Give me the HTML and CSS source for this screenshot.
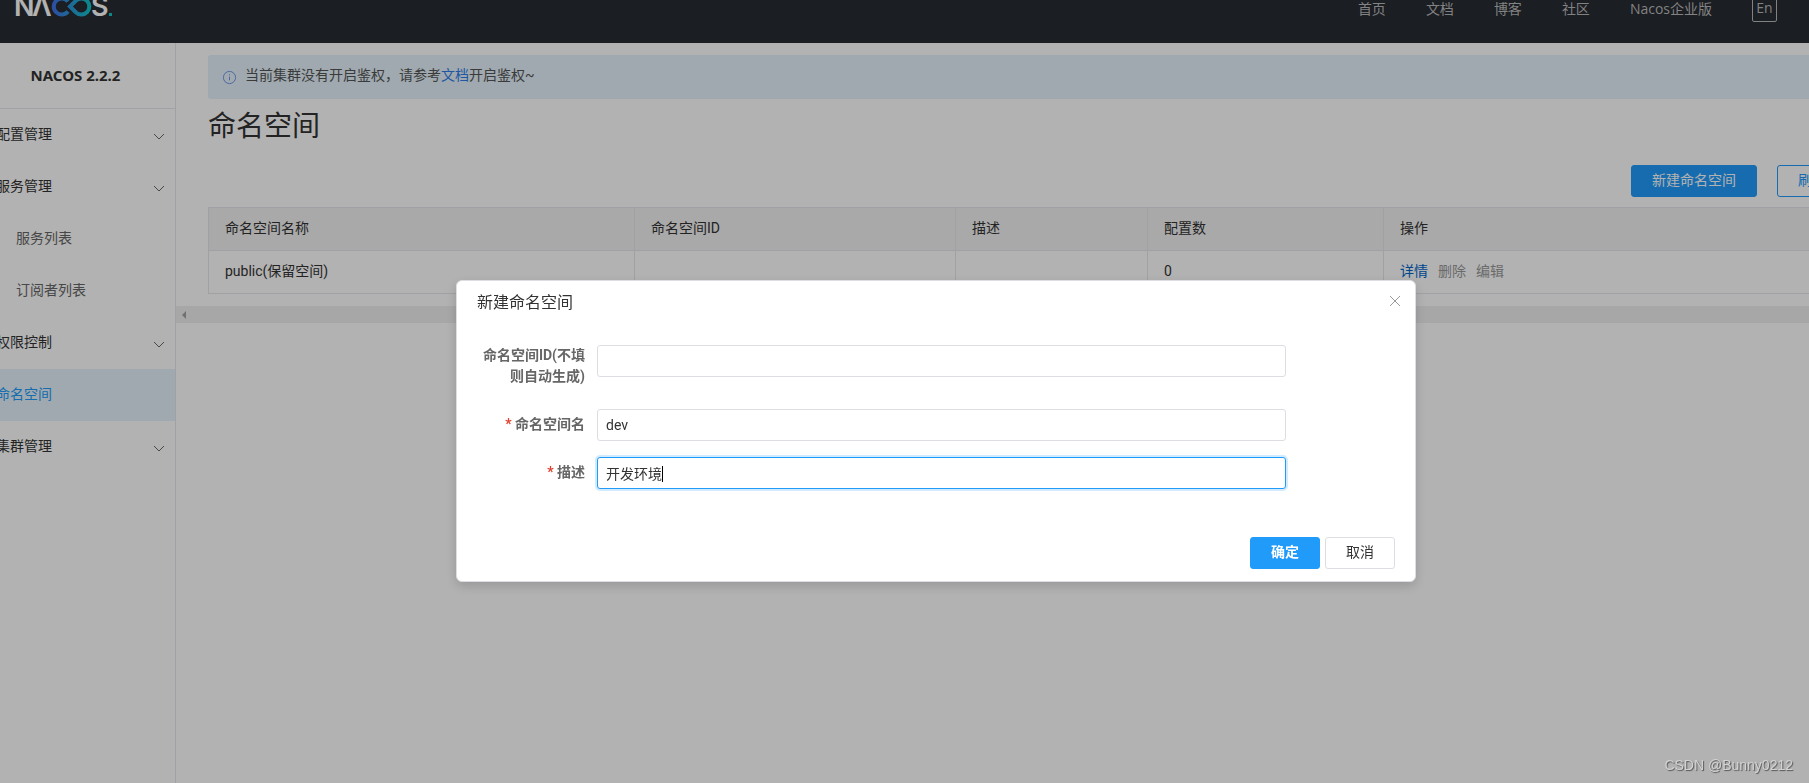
FILE: index.html
```html
<!DOCTYPE html>
<html lang="zh-CN">
<head>
<meta charset="utf-8">
<title>Nacos</title>
<link rel="stylesheet" href="styles.css">
</head>
<body>
<header class="header">
  <a class="logo" href="#" aria-label="NACOS">
    <svg width="98" height="26" viewBox="0 0 98 26">
      <defs>
        <linearGradient id="loop" x1="0" x2="1" y1="0" y2="0">
          <stop offset="0" stop-color="#3f74e8"/>
          <stop offset="1" stop-color="#12c2c9"/>
        </linearGradient>
      </defs>
      <g class="logo-text">
        <text x="-2" y="20">N</text>
        <text x="16" y="20">Λ</text>
        <text x="75" y="20">S</text>
      </g>
      <path d="M52 5.500A8 8 0 1 0 52 15.500M54 10.500L60 4.500A8 8 0 1 1 60 16.500Z" fill="none" stroke="url(#loop)" stroke-width="4"/>
      <rect x="93" y="17" width="3" height="3" fill="#12c2c9"/>
    </svg>
  </a>
  <nav class="nav">
    <a href="#">首页</a>
    <a href="#">文档</a>
    <a href="#">博客</a>
    <a href="#">社区</a>
    <a href="#">Nacos企业版</a>
    <button class="lang" type="button">En</button>
  </nav>
</header>
<div class="layout">
  <aside class="sidebar">
    <h1 class="version">NACOS 2.2.2</h1>
    <nav class="menu">
      <a class="item" href="#">配置管理<svg class="chevron" viewBox="0 0 12 8"><path d="M1 1l5 5 5-5"/></svg></a>
      <a class="item" href="#">服务管理<svg class="chevron" viewBox="0 0 12 8"><path d="M1 1l5 5 5-5"/></svg></a>
      <a class="item sub" href="#">服务列表</a>
      <a class="item sub" href="#">订阅者列表</a>
      <a class="item" href="#">权限控制<svg class="chevron" viewBox="0 0 12 8"><path d="M1 1l5 5 5-5"/></svg></a>
      <a class="item selected" href="#">命名空间</a>
      <a class="item" href="#">集群管理<svg class="chevron" viewBox="0 0 12 8"><path d="M1 1l5 5 5-5"/></svg></a>
    </nav>
  </aside>
  <main class="main">
    <div class="content">
      <div class="notice">
        <svg class="info" viewBox="0 0 16 16"><circle cx="8" cy="8" r="6.500"/><path d="M8 7v4M8 4.500v1.200"/></svg>
        <p>当前集群没有开启鉴权，请参考<a href="#">文档</a>开启鉴权~</p>
      </div>
      <h2 class="page-title">命名空间</h2>
      <div class="toolbar">
        <button class="btn primary" type="button">新建命名空间</button>
        <button class="btn outline" type="button">刷新</button>
      </div>
      <table class="table">
        <colgroup><col class="c-name"><col class="c-id"><col class="c-desc"><col class="c-count"><col></colgroup>
        <thead>
          <tr><th>命名空间名称</th><th>命名空间ID</th><th>描述</th><th>配置数</th><th>操作</th></tr>
        </thead>
        <tbody>
          <tr>
            <td>public(保留空间)</td><td></td><td></td><td>0</td>
            <td><div class="actions"><a href="#">详情</a><span>删除</span><span>编辑</span></div></td>
          </tr>
        </tbody>
      </table>
    </div>
    <div class="scrollbar"><svg width="5" height="8" viewBox="0 0 5 8"><path d="M4 0v8L0 4z"/></svg></div>
  </main>
</div>
<div class="overlay">
  <section class="dialog" role="dialog" aria-labelledby="dialog-title">
    <div class="dialog-head">
      <h2 id="dialog-title">新建命名空间</h2>
      <button class="close" type="button" aria-label="关闭"><svg width="12" height="12" viewBox="0 0 12 12"><path d="M1 1l10 10M11 1L1 11"/></svg></button>
    </div>
    <form class="form">
      <div class="field tall">
        <label for="ns-id">命名空间ID(不填则自动生成)</label>
        <input id="ns-id" type="text">
      </div>
      <div class="field">
        <label for="ns-name"><span class="star">*</span> 命名空间名</label>
        <input id="ns-name" type="text" value="dev">
      </div>
      <div class="field">
        <label for="ns-desc"><span class="star">*</span> 描述</label>
        <div class="control">
          <input id="ns-desc" class="active" type="text" value="开发环境">
          <span class="caret"></span>
        </div>
      </div>
    </form>
    <div class="dialog-foot">
      <button class="btn primary strong" type="button">确定</button>
      <button class="btn" type="button">取消</button>
    </div>
  </section>
</div>
<div class="watermark">CSDN @Bunny0212</div>
</body>
</html>
```
FILE: styles.css
```css
* { box-sizing: border-box; }
html, body { height: 100%; }
body {
  margin: 0;
  overflow: hidden;
  display: flex;
  flex-direction: column;
  background: #fff;
  color: #333;
  font: 14px/20px Roboto, "Noto Sans CJK SC", sans-serif;
}
h1, h2, p { margin: 0; font-weight: 400; }
a { color: inherit; text-decoration: none; }
button, input { font: inherit; color: inherit; }

.header {
  flex: none;
  height: 66px;
  margin-top: -23px;
  padding: 0 32px 2px 16px;
  display: flex;
  justify-content: space-between;
  align-items: center;
  background: #272b32;
}
.logo svg { display: block; overflow: visible; }
.logo-text { font: 600 27px Inter, sans-serif; fill: #fff; }
.nav {
  display: flex;
  align-items: center;
  gap: 40px;
  color: #bababa;
  font-family: "Open Sans", "Noto Sans CJK SC", sans-serif;
}
.lang {
  width: 25px;
  height: 26px;
  padding: 0 0 3px;
  background: none;
  border: 1px solid #bababa;
  border-radius: 2px;
}

.layout { flex: 1; display: flex; min-height: 0; }
.sidebar {
  flex: none;
  width: 200px;
  margin-left: -24px;
  border-right: 1px solid #e6e7eb;
}
.version {
  height: 66px;
  border-bottom: 1px solid #e6e7eb;
  font: 700 15px/64px "Noto Sans", sans-serif;
  text-align: center;
}
.item {
  display: flex;
  justify-content: space-between;
  align-items: center;
  height: 52px;
  padding: 0 10px 2px 20px;
}
.item.sub { padding-left: 40px; color: #666; }
.item.selected { background: #e4f3fb; color: #209bfa; }
.chevron { width: 12px; height: 8px; margin-top: 6px; fill: none; stroke: #666; }

.main { flex: 1; min-width: 0; }
.content { margin-right: -38px; padding: 12px 0 12px 32px; }
.notice {
  display: flex;
  align-items: center;
  gap: 8px;
  height: 44px;
  padding: 0 14px;
  background: #e4f3fb;
  border-radius: 3px;
  color: #555;
}
.notice p { padding-bottom: 4px; }
.notice a { color: #2e7de9; }
.info { width: 15px; height: 15px; fill: none; stroke: #6b8fe8; }
.page-title { padding-top: 8px; font-size: 28px; line-height: 40px; }
.toolbar {
  display: flex;
  justify-content: flex-end;
  gap: 20px;
  padding: 18px 0 10px;
}
.btn {
  height: 32px;
  padding: 0 20px 3px;
  background: #fff;
  border: 1px solid #dcdee3;
  border-radius: 3px;
  line-height: 26px;
}
.btn.primary { background: #209bfa; border-color: #209bfa; color: #fff; }
.btn.outline { border-color: #209bfa; color: #209bfa; }
.btn.strong { font-weight: 700; }

.table { width: 100%; table-layout: fixed; border-collapse: collapse; }
.c-name { width: 426px; }
.c-id { width: 321px; }
.c-desc { width: 192px; }
.c-count { width: 236px; }
.table th, .table td {
  height: 43px;
  padding: 0 16px 2px;
  border: 1px solid #e6e7eb;
  font-weight: 400;
  text-align: left;
}
.table th { background: #f2f2f2; }
.actions { display: flex; gap: 10px; color: #999; }
.actions a { color: #06c; }
.scrollbar { height: 17px; padding: 5px 6px; background: #f0f0f0; }
.scrollbar svg { display: block; fill: #a3a3a3; }

.overlay {
  position: fixed;
  inset: 0;
  display: flex;
  justify-content: center;
  align-items: flex-start;
  padding: 280px 0 0 63px;
  background: rgba(0, 0, 0, 0.3);
}
.dialog {
  width: 960px;
  background: #fff;
  border: 1px solid #dcdee3;
  border-radius: 6px;
  box-shadow: 0 4px 12px rgba(0, 0, 0, 0.16);
}
.dialog-head {
  display: flex;
  justify-content: space-between;
  padding: 12px 14px 12px 20px;
}
.dialog-head h2 { font-size: 16px; line-height: 20px; }
.close { display: flex; align-items: center; height: 16px; padding: 0; background: none; border: 0; }
.close svg { fill: none; stroke: #999; }
.form { display: grid; gap: 16px; padding: 20px 20px 0; }
.field {
  display: grid;
  grid-template-columns: 108px minmax(0, 1fr);
  column-gap: 12px;
  align-items: start;
  padding-right: 109px;
}
.field label { color: #666; font-weight: 700; line-height: 30px; text-align: right; }
.field.tall { height: 48px; }
.field.tall label { line-height: 21px; padding-left: 4px; }
.star { color: #e0402e; }
.field input {
  display: block;
  width: 100%;
  height: 32px;
  padding: 0 8px;
  border: 1px solid #dcdee3;
  border-radius: 3px;
  outline: 0;
}
.field input.active { border-color: #209bfa; box-shadow: 0 0 0 2px rgba(32, 155, 250, 0.2); }
.control { position: relative; }
.caret {
  position: absolute;
  left: 65px;
  top: 9px;
  width: 1px;
  height: 16px;
  background: #000;
}
.dialog-foot {
  display: flex;
  justify-content: flex-end;
  gap: 5px;
  padding: 48px 20px 12px;
}

.watermark {
  position: fixed;
  right: 16px;
  bottom: 8px;
  color: #d2d2d2;
  font: 14px/20px "Liberation Sans", sans-serif;
  text-shadow: 1px 1px 1px #555;
}
```
